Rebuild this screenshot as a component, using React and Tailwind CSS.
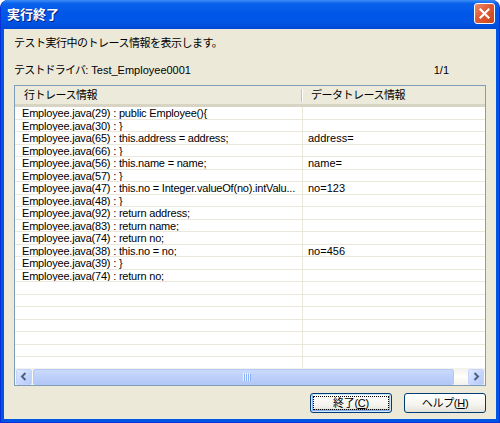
import React from "react";

const rows = [
  ["Employee.java(29) : public Employee(){", ""],
  ["Employee.java(30) : }", ""],
  ["Employee.java(65) : this.address = address;", "address="],
  ["Employee.java(66) : }", ""],
  ["Employee.java(56) : this.name = name;", "name="],
  ["Employee.java(57) : }", ""],
  ["Employee.java(47) : this.no = Integer.valueOf(no).intValu...", "no=123"],
  ["Employee.java(48) : }", ""],
  ["Employee.java(92) : return address;", ""],
  ["Employee.java(83) : return name;", ""],
  ["Employee.java(74) : return no;", ""],
  ["Employee.java(38) : this.no = no;", "no=456"],
  ["Employee.java(39) : }", ""],
  ["Employee.java(74) : return no;", ""],
  ["", ""],
  ["", ""],
  ["", ""],
  ["", ""],
  ["", ""],
  ["", ""],
  ["", ""],
];

function Row({ a, b, i }) {
  return (
    <div
      className={`flex shrink-0 border-b border-[#EBE8D9] ${
        i % 2 === 0 ? "h-[13px]" : "h-[12px]"
      }`}
    >
      <div className="w-[288px] shrink-0 border-r border-[#EBE8D9] pl-[7px] overflow-hidden whitespace-nowrap leading-[12px] tracking-[-0.2px]">
        {a}
      </div>
      <div className="flex-1 pl-[5px] overflow-hidden whitespace-nowrap leading-[12px]">
        {b}
      </div>
    </div>
  );
}

function ArrowBtn({ dir }) {
  return (
    <div className="w-[16px] h-[16px] shrink-0 rounded-[2px] border border-[#C3D3FD] bg-[linear-gradient(135deg,#E2EBFE_0%,#C4D5FD_60%,#B7CAF5_100%)] flex items-center justify-center">
      <svg width="8" height="9" viewBox="0 0 8 9">
        {dir === "left" ? (
          <path d="M5.5 1 L2 4.5 L5.5 8" stroke="#4D6185" strokeWidth="2" fill="none" />
        ) : (
          <path d="M2.5 1 L6 4.5 L2.5 8" stroke="#4D6185" strokeWidth="2" fill="none" />
        )}
      </svg>
    </div>
  );
}

function Button({ children, def }) {
  return (
    <div
      className={`w-[82px] h-[20px] rounded-[3px] border border-[#003C74] bg-[linear-gradient(180deg,#FFFFFF_0%,#F5F4EF_60%,#E3E1D8_100%)] flex p-[1px] ${
        def ? "shadow-[inset_0_0_0_1px_#CEE7FF,inset_0_-1px_0_2px_#89ADE4]" : ""
      }`}
    >
      <div
        className={`flex-1 flex items-center justify-center ${
          def ? "border border-dotted border-black m-[1px]" : ""
        }`}
      >
        {children}
      </div>
    </div>
  );
}

export default function App() {
  return (
    <div
      className="w-[500px] h-[423px] bg-white text-[11px] text-black"
      style={{ fontFamily: '"Liberation Sans","Noto Sans CJK JP",sans-serif' }}
    >
      <div className="w-[500px] h-[423px] flex flex-col rounded-t-[8px] bg-[#0055E5] border-x border-b border-[#0831D9] overflow-hidden">
        {/* title bar */}
        <div className="h-[29px] shrink-0 flex items-center justify-between pl-[6px] pr-[4px] bg-[linear-gradient(180deg,#3D8EF8_0%,#0A62EC_12%,#0058E8_40%,#0055E5_75%,#0049D6_100%)]">
          <div className="text-white font-bold text-[13px] [text-shadow:1px_1px_0_#0A1E80] leading-none">
            実行終了
          </div>
          <div className="w-[21px] h-[21px] rounded-[3px] border border-white bg-[linear-gradient(135deg,#EE8C6C_0%,#E05A36_45%,#C94418_100%)] flex items-center justify-center mb-[2px]">
            <svg width="13" height="13" viewBox="0 0 13 13">
              <path d="M2.5 2.5 L10.5 10.5 M10.5 2.5 L2.5 10.5" stroke="white" strokeWidth="2.2" strokeLinecap="square" />
            </svg>
          </div>
        </div>
        {/* body */}
        <div className="flex-1 mx-[3px] mb-[3px] bg-[#ECE9D8] flex flex-col px-[10px] pt-[6px] pb-[6px]">
          <div className="h-[16px] flex items-center tracking-[-0.5px]">
            テスト実行中のトレース情報を表示します。
          </div>
          <div className="h-[16px] mt-[11px] flex items-center justify-between pr-[37px]">
            <span>
              <span className="tracking-[-0.8px]">テストドライバ</span>: Test_Employee0001
            </span>
            <span>1/1</span>
          </div>
          {/* list */}
          <div className="mt-[7px] h-[301px] shrink-0 border border-[#7F9DB9] bg-white flex flex-col overflow-hidden">
            <div className="h-[21px] shrink-0 flex bg-[#EBEADB] border-b-[3px] border-b-[#D8D4C4] tracking-[-0.5px]">
              <div className="w-[288px] shrink-0 flex items-center pl-[9px] relative">
                行トレース情報
                <div className="absolute right-0 top-[3px] h-[13px] w-[2px] border-l border-[#C7C5B2] border-r border-r-white" />
              </div>
              <div className="flex-1 flex items-center pl-[8px]">データトレース情報</div>
            </div>
            <div className="flex-1 flex flex-col overflow-hidden">
              {rows.map((r, i) => (
                <Row key={i} a={r[0]} b={r[1]} i={i} />
              ))}
            </div>
            <div className="h-[17px] shrink-0 flex items-center gap-[1px] px-[1px] bg-[linear-gradient(180deg,#F3F1EA_0%,#FEFEFB_50%,#F3F1EA_100%)]">
              <ArrowBtn dir="left" />
              <div className="flex-1 h-[16px] flex pr-[13px]">
                <div className="flex-1 rounded-[2px] border border-[#B4C8F6] bg-[linear-gradient(180deg,#CADAFC_0%,#BDD0FA_50%,#B3C8F6_100%)] flex items-center justify-center pl-[7px]">
                  <svg width="8" height="8" viewBox="0 0 8 8">
                    <path d="M0.5 0V8 M2.5 0V8 M4.5 0V8 M6.5 0V8" stroke="#EEF4FE" strokeWidth="1" />
                    <path d="M1.5 1V8 M3.5 1V8 M5.5 1V8 M7.5 1V8" stroke="#8CB0F8" strokeWidth="1" />
                  </svg>
                </div>
              </div>
              <ArrowBtn dir="right" />
            </div>
          </div>
          {/* buttons */}
          <div className="mt-[7px] flex justify-end gap-[12px]">
            <Button def>
              <span className="tracking-[-0.3px]">
                終了(<span className="underline">C</span>)
              </span>
            </Button>
            <Button>
              <span className="tracking-[-0.3px]">
                ヘルプ(<span className="underline">H</span>)
              </span>
            </Button>
          </div>
        </div>
      </div>
    </div>
  );
}
